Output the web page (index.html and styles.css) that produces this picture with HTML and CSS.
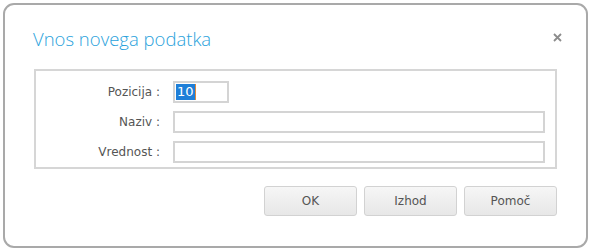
FILE: index.html
```html
<!DOCTYPE html>
<html>
<head>
<meta charset="utf-8">
<link rel="stylesheet" href="styles.css">
</head>
<body>
<div class="dialog">
  <div class="header">
    <span class="title">Vnos novega podatka</span>
    <svg class="close" width="9" height="9" viewBox="0 0 9 9"><path d="M1 1 L8 8 M8 1 L1 8" stroke="#8c8c8c" stroke-width="1.8" fill="none"/></svg>
  </div>
  <div class="fields">
    <label class="lbl">Pozicija :</label>
    <div class="input short"><span class="sel">10</span><span class="caret"></span></div>
    <label class="lbl">Naziv :</label>
    <div class="input"></div>
    <label class="lbl">Vrednost :</label>
    <div class="input"></div>
  </div>
  <div class="buttons">
    <button class="btn">OK</button>
    <button class="btn">Izhod</button>
    <button class="btn">Pomoč</button>
  </div>
</div>
</body>
</html>
```
FILE: styles.css
```css
html, body {
  margin: 0;
  padding: 0;
  background: #ffffff;
}
body {
  padding: 3px;
  font-family: "DejaVu Sans", Verdana, sans-serif;
  font-size: 12px;
  color: #444;
}
.dialog {
  width: 523px;
  height: 241px;
  border: 2px solid #a9a9a9;
  border-radius: 11px;
  padding: 0 29px;
  background: #fff;
}
.header {
  height: 64px;
  display: flex;
  align-items: center;
  justify-content: space-between;
}
.title {
  font-family: "Open Sans", sans-serif;
  font-size: 18.5px;
  font-weight: 300;
  color: #2aa2dc;
  margin-top: 2px;
  margin-left: -1px;
}
.close {
  margin-right: -5px;
  margin-top: 0;
}
.fields {
  border: 2px solid #d6d6d6;
  padding: 10px 10px 4px 0;
  display: grid;
  grid-template-columns: 124px 1fr;
  column-gap: 13px;
  row-gap: 8px;
  align-items: center;
}
.lbl {
  text-align: right;
  color: #555;
  font-size: 12px;
}
.input {
  height: 22px;
  box-sizing: border-box;
  border: 2px solid #d4d4d4;
  display: flex;
  align-items: center;
  padding-left: 1px;
}
.input.short {
  width: 56px;
}
.sel {
  background: #1e7fd8;
  color: #fff;
  font-size: 13px;
  line-height: 16px;
  padding: 0 1px;
}
.caret {
  width: 1px;
  height: 16px;
  background: #e08a3c;
}
.buttons {
  display: flex;
  justify-content: flex-end;
  gap: 7px;
  margin-top: 17px;
}
.btn {
  width: 93px;
  height: 30px;
  border: 1px solid #d2d2d2;
  border-radius: 3px;
  background: linear-gradient(#f6f6f6, #e7e7e7);
  font-family: "DejaVu Sans", Verdana, sans-serif;
  font-size: 12px;
  color: #555;
  padding: 0;
}
```
